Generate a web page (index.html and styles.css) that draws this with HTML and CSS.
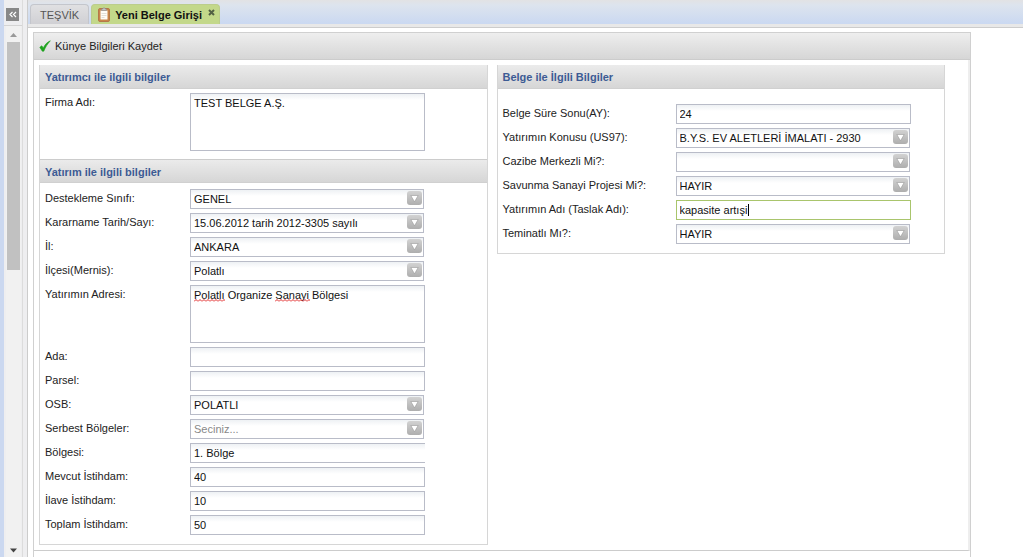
FILE: index.html
```html
<!DOCTYPE html>
<html lang="tr">
<head>
<meta charset="utf-8">
<title>Yeni Belge Girişi</title>
<link rel="stylesheet" href="styles.css">
</head>
<body>
<svg class="defs" aria-hidden="true">
  <defs>
    <linearGradient id="btn" x1="0" y1="0" x2="0" y2="1"><stop offset="0" stop-color="#d2d2d2"/><stop offset="1" stop-color="#aeaeae"/></linearGradient>
    <symbol id="drop" viewBox="0 0 15 15"><rect width="15" height="14" rx="3" fill="url(#btn)"/><path d="M3.800 4.500h7.400L7.500 10.800z" fill="#fff" stroke="#999" stroke-width=".6"/></symbol>
    <pattern id="zig" width="4" height="3" patternUnits="userSpaceOnUse"><path d="M0 2.500L2 .5l2 2" fill="none" stroke="#e02020"/></pattern>
  </defs>
</svg>
<div class="app">
  <aside class="side">
    <div class="side-head">
      <button class="collapse" type="button" aria-label="Daralt"><svg viewBox="0 0 13 13"><rect width="13" height="13" fill="#888"/><path d="M6.500 4l-2.500 2.500 2.500 2.500M10 4L7.500 6.500 10 9" fill="none" stroke="#fff" stroke-width="1.200"/></svg></button>
    </div>
    <div class="scroll">
      <svg class="arrow" viewBox="0 0 13 15"><path d="M3 10.500h7L6.500 6.500z" fill="#999"/></svg>
      <div class="thumb"></div>
      <svg class="arrow end" viewBox="0 0 13 15"><path d="M3 7h7L6.500 11z" fill="#444"/></svg>
    </div>
  </aside>
  <main class="main">
    <nav class="tabs">
      <a class="tab" href="#tesvik">TEŞVİK</a>
      <a class="tab active" href="#belge">
        <svg class="clip" viewBox="0 0 12 15"><rect x=".5" y="1.500" width="11" height="13" rx="1.500" fill="#c98548" stroke="#b5784a"/><rect x="2.500" y="3.500" width="7" height="9" fill="#fffdf8"/><path d="M3.500 3.500V2h1.300a1.200 1.200 0 0 1 2.400 0h1.300v1.500z" fill="#c4c4c4" stroke="#8d8d8d" stroke-width=".6"/><path d="M3.500 6.500h5M3.500 8.500h5M3.500 10.500h3" stroke="#d6d2cc" stroke-width=".7"/></svg>
        <span>Yeni Belge Girişi</span>
        <svg class="close" viewBox="0 0 7 7"><path d="M1 1l5 5M6 1L1 6" stroke="#536044" stroke-width="2"/></svg>
      </a>
    </nav>
    <div class="page">
      <form class="sheet">
        <div class="toolbar">
          <button class="save" type="button"><svg viewBox="0 0 12 12"><path d="M.8 7.300l2-1.500 1.500 2.100C6 4.500 8 2.300 11.300.8 8.500 4 6.500 7 4.800 11.200H3.300z" fill="#1ea31e" stroke="#1ea31e" stroke-width=".6"/></svg>Künye Bilgileri Kaydet</button>
        </div>
        <div class="columns">
          <div class="card">
            <h2 class="title">Yatırımcı ile ilgili bilgiler</h2>
            <div class="rows firm">
              <div class="row tall"><label for="firma">Firma Adı:</label><textarea id="firma" class="field">TEST BELGE A.Ş.</textarea></div>
            </div>
            <h2 class="title second">Yatırım ile ilgili bilgiler</h2>
            <div class="rows invest">
              <div class="row"><label for="sinif">Destekleme Sınıfı:</label><div class="combo"><select id="sinif" class="field"><option>GENEL</option></select><svg><use href="#drop"/></svg></div></div>
              <div class="row"><label for="karar">Kararname Tarih/Sayı:</label><div class="combo"><select id="karar" class="field"><option>15.06.2012 tarih 2012-3305 sayılı</option></select><svg><use href="#drop"/></svg></div></div>
              <div class="row"><label for="il">İl:</label><div class="combo"><select id="il" class="field"><option>ANKARA</option></select><svg><use href="#drop"/></svg></div></div>
              <div class="row"><label for="ilce">İlçesi(Mernis):</label><div class="combo"><select id="ilce" class="field"><option>Polatlı</option></select><svg><use href="#drop"/></svg></div></div>
              <div class="row tall"><label for="adres">Yatırımın Adresi:</label><div class="combo"><textarea id="adres" class="field" spellcheck="false">Polatlı Organize Sanayi Bölgesi</textarea><svg class="wave first"><rect width="100%" height="3" fill="url(#zig)"/></svg><svg class="wave third"><rect width="100%" height="3" fill="url(#zig)"/></svg></div></div>
              <div class="row"><label for="ada">Ada:</label><input id="ada" class="field" type="text"></div>
              <div class="row"><label for="parsel">Parsel:</label><input id="parsel" class="field" type="text"></div>
              <div class="row"><label for="osb">OSB:</label><div class="combo"><select id="osb" class="field"><option>POLATLI</option></select><svg><use href="#drop"/></svg></div></div>
              <div class="row"><label for="serbest">Serbest Bölgeler:</label><div class="combo"><select id="serbest" class="field hint"><option>Seciniz...</option></select><svg><use href="#drop"/></svg></div></div>
              <div class="row"><label for="bolge">Bölgesi:</label><input id="bolge" class="field open" type="text" value="1. Bölge"></div>
              <div class="row"><label for="mevcut">Mevcut İstihdam:</label><input id="mevcut" class="field" type="text" value="40"></div>
              <div class="row"><label for="ilave">İlave İstihdam:</label><input id="ilave" class="field" type="text" value="10"></div>
              <div class="row"><label for="toplam">Toplam İstihdam:</label><input id="toplam" class="field" type="text" value="50"></div>
            </div>
          </div>
          <div class="card document">
            <h2 class="title">Belge ile İlgili Bilgiler</h2>
            <div class="rows wide">
              <div class="row"><label for="sure">Belge Süre Sonu(AY):</label><input id="sure" class="field" type="text" value="24"></div>
              <div class="row"><label for="konu">Yatırımın Konusu (US97):</label><div class="combo"><select id="konu" class="field"><option>B.Y.S. EV ALETLERİ İMALATI - 2930</option></select><svg><use href="#drop"/></svg></div></div>
              <div class="row"><label for="cazibe">Cazibe Merkezli Mi?:</label><div class="combo"><select id="cazibe" class="field"><option></option></select><svg><use href="#drop"/></svg></div></div>
              <div class="row"><label for="savunma">Savunma Sanayi Projesi Mi?:</label><div class="combo"><select id="savunma" class="field"><option>HAYIR</option></select><svg><use href="#drop"/></svg></div></div>
              <div class="row"><label for="taslak">Yatırımın Adı (Taslak Adı):</label><div class="combo text"><input id="taslak" class="field current" type="text" value="kapasite artışi"><span class="caret"></span></div></div>
              <div class="row"><label for="teminat">Teminatlı Mı?:</label><div class="combo"><select id="teminat" class="field"><option>HAYIR</option></select><svg><use href="#drop"/></svg></div></div>
            </div>
          </div>
        </div>
      </form>
    </div>
  </main>
</div>
</body>
</html>
```
FILE: styles.css
```css
* { box-sizing: border-box; }
body {
  margin: 0;
  overflow: hidden;
  font: 11px/14px "Liberation Sans", Arial, sans-serif;
  color: #222;
  background: #fff;
}
button, input, select, textarea { font: inherit; color: inherit; }
.defs { position: absolute; width: 0; height: 0; }
.app { display: flex; height: 100vh; background: #eeeef0; }

.side {
  flex: none;
  width: 23px;
  display: flex;
  flex-direction: column;
  border-left: 4px solid #cbd8f0;
  border-right: 1px solid #dcdcdc;
}
.side-head { height: 26px; padding: 8px 0 0 2px; border-bottom: 1px solid #d4d4d4; }
.collapse { display: block; width: 13px; height: 13px; padding: 0; border: 0; }
.collapse svg { display: block; }
.scroll {
  flex: 1;
  width: 15px;
  margin-left: 2px;
  padding: 0 1px;
  display: flex;
  flex-direction: column;
  background: #f1f1f1;
}
.arrow { width: 13px; height: 16px; }
.thumb { height: 43%; background: #c1c1c1; }
.end { margin-top: auto; }

.main { flex: 1; min-width: 0; margin-left: 4px; display: flex; flex-direction: column; border-left: 1px solid #ccc; }
.tabs {
  flex: none;
  display: flex;
  gap: 2px;
  height: 28px;
  padding: 4px 2px 0;
  background: linear-gradient(#e2e2e4 0, #dde4ee 5px, #cbd9f1 23px);
  border-bottom: 1px solid #ccc;
  box-shadow: inset 0 -3px #e8e8e8;
}
.tab {
  display: flex;
  height: 20px;
  padding: 0 9px;
  line-height: 20px;
  color: #555;
  text-decoration: none;
  background: linear-gradient(#e0e0e2, #d0d0d4);
  border: 1px solid #c4c6cc;
  border-bottom: 0;
  border-radius: 4px 4px 0 0;
}
.active { gap: 5px; padding: 0 4px 0 6px; font-weight: bold; color: #111; background: #c3d88a; border-color: #bccd8c; }
.clip { width: 12px; height: 15px; margin-top: 2px; }
.close { width: 7px; height: 7px; margin: 4px 0 0 1px; }

.page { flex: 1; padding: 4px 52px 0 5px; background: #fff; }
.sheet { height: 100%; border: 1px solid #d0d0d0; border-bottom: 0; }
.toolbar { height: 27px; padding: 5px; background: linear-gradient(#eee, #d6d6d6); border-bottom: 1px solid #ccc; }
.save { display: flex; align-items: center; gap: 4px; height: 16px; padding: 0; border: 0; background: none; }
.save svg { width: 12px; height: 12px; }
.columns {
  display: grid;
  grid-template-columns: 1fr 1fr;
  gap: 9px;
  align-items: start;
  padding: 5px 23px 5px 5px;
  border-right: 2px solid #eee;
  border-bottom: 1px solid #ccc;
}
.card { border: 1px solid #d6d6d6; border-top: 0; }
.title {
  height: 24px;
  margin: 0;
  padding: 0 5px;
  font-size: 11px;
  line-height: 24px;
  color: #3d5b94;
  background: linear-gradient(#ebebeb, #d6d6d6);
  border-bottom: 1px solid #d0d0d0;
}
.second { border-top: 1px solid #ccc; }
.rows { display: grid; gap: 4px; }
.firm { padding: 4px 5px 8px; }
.invest { padding: 6px 5px 9px; }
.wide { padding: 15px 5px 9px; }
.row { display: grid; grid-template-columns: 145px 235px; height: 20px; line-height: 18px; }
.wide .row { grid-template-columns: 173px 235px; }
.tall { height: 58px; }
.combo { position: relative; width: 234px; }
.tall .combo, .text { width: 235px; }
.combo svg { position: absolute; top: 2px; right: 2px; width: 15px; height: 15px; pointer-events: none; }
.field {
  display: block;
  width: 100%;
  height: 100%;
  margin: 0;
  padding: 0 3px;
  color: #111;
  background: linear-gradient(#eef1f4, #fff 6px);
  border: 1px solid #b9bcc8;
  border-radius: 0;
  outline: 0;
  appearance: none;
  resize: none;
  overflow: hidden;
}
.hint { color: #888; }
.open { border-right: 0; }
.current { border-color: #a9c56c; background: #fff; }
.combo .wave { top: 14px; right: auto; height: 3px; }
.combo .first { left: 4px; width: 31px; }
.combo .third { left: 85px; width: 35px; }
.caret { position: absolute; top: 4px; left: 72px; width: 1px; height: 12px; background: #000; }
```
